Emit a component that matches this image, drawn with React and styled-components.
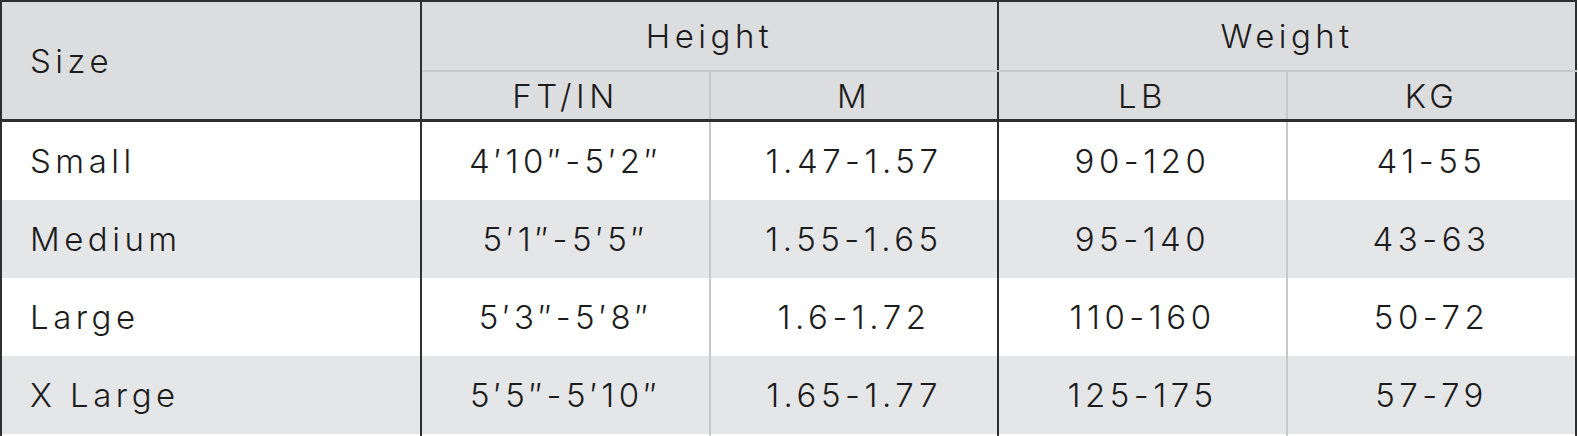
import React from "react";
import styled, {createGlobalStyle} from "styled-components";

const GlobalStyle = createGlobalStyle`
  body {
    margin: 0;
    background: #ffffff;
    font-family: 'Inter', 'Liberation Sans', sans-serif;
  }
`;

const DARK = "#2f2f2f";
const LIGHT = "#c7c8ca";

const Table = styled.table`
  width: 1575px;
  border-collapse: collapse;
  table-layout: fixed;
  border: 2px solid ${DARK};
  border-bottom: none;
  color: #1c1c1c;
  font-size: 33px;
  font-weight: 350;
  letter-spacing: 4.5px;
`;

const Head = styled.thead`
  background: #dcdddf;
  border-bottom: 3px solid ${DARK};
`;

const HeadCell = styled.th`
  font-weight: 350;
  padding: 0;
  height: ${({tall}) => (tall ? "68px" : "47px")};
  text-align: ${({left}) => (left ? "left" : "center")};
  padding-left: ${({left}) => (left ? "28px" : "0")};
  border-right: 2px solid ${({light}) => (light ? LIGHT : DARK)};
  border-bottom: ${({group}) => (group ? `2px solid ${LIGHT}` : "none")};
`;

const Row = styled.tr`
  background: ${({striped}) => (striped ? "#e5e6e8" : "#ffffff")};
`;

const Cell = styled.td`
  height: 78px;
  padding: 0;
  text-align: ${({left}) => (left ? "left" : "center")};
  padding-left: ${({left}) => (left ? "28px" : "0")};
  border-right: 2px solid ${({light}) => (light ? LIGHT : DARK)};
`;

const rows = [
  ["Small", "4′10″-5′2″", "1.47-1.57", "90-120", "41-55"],
  ["Medium", "5′1″-5′5″", "1.55-1.65", "95-140", "43-63"],
  ["Large", "5′3″-5′8″", "1.6-1.72", "110-160", "50-72"],
  ["X Large", "5′5″-5′10″", "1.65-1.77", "125-175", "57-79"],
  ["", "", "", "", ""],
];

const SizeChart = () => {
  return (
    <Table>
      <colgroup>
        <col style={{width: "420px"}}/>
        <col style={{width: "289px"}}/>
        <col style={{width: "288px"}}/>
        <col style={{width: "289px"}}/>
        <col style={{width: "289px"}}/>
      </colgroup>
      <Head>
        <tr>
          <HeadCell rowSpan={2} left tall>Size</HeadCell>
          <HeadCell colSpan={2} tall group>Height</HeadCell>
          <HeadCell colSpan={2} tall group>Weight</HeadCell>
        </tr>
        <tr>
          <HeadCell light>FT/IN</HeadCell>
          <HeadCell>M</HeadCell>
          <HeadCell light>LB</HeadCell>
          <HeadCell>KG</HeadCell>
        </tr>
      </Head>
      <tbody>
        {rows.map((r, i) => (
          <Row key={i} striped={i % 2 === 1}>
            <Cell left>{r[0]}</Cell>
            <Cell light>{r[1]}</Cell>
            <Cell>{r[2]}</Cell>
            <Cell light>{r[3]}</Cell>
            <Cell>{r[4]}</Cell>
          </Row>
        ))}
      </tbody>
    </Table>
  );
};

const App = () => (
  <>
    <GlobalStyle/>
    <SizeChart/>
  </>
);

export default App;
